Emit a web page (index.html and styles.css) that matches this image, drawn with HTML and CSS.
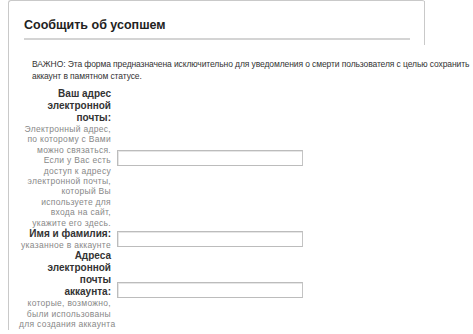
FILE: index.html
```html
<!DOCTYPE html>
<html lang="ru">
<head>
	<meta charset="UTF-8">
	<title>Сообщить об усопшем</title>
	<link rel="stylesheet" href="styles.css">
</head>
<body>
	<section class="box">
		<div class="head">
			<h2>Сообщить об усопшем</h2>
		</div>
		<p class="notice">ВАЖНО: Эта форма предназначена исключительно для уведомления о смерти пользователя с целью сохранить<br>аккаунт в памятном статусе.</p>

		<div class="form">
			<div class="row">
				<label class="lbl">
					<b>Ваш адрес<br>электронной<br>почты:</b>
					<span>Электронный адрес,<br>по которому с Вами<br>можно связаться.<br>Если у Вас есть<br>доступ к адресу<br>электронной почты,<br>который Вы<br>используете для<br>входа на сайт,<br>укажите его здесь.</span>
				</label>
				<input type="text" class="inp">
			</div>
			<div class="row">
				<label class="lbl">
					<b>Имя и фамилия:</b>
					<span>указанное в аккаунте</span>
				</label>
				<input type="text" class="inp">
			</div>
			<div class="row">
				<label class="lbl">
					<b>Адреса<br>электронной<br>почты<br>аккаунта:</b>
					<span>которые, возможно,<br>были использованы<br>для создания аккаунта</span>
				</label>
				<input type="text" class="inp">
			</div>
		</div>
	</section>
</body>
</html>
```

FILE: styles.css
```css
*{margin:0; padding:0;}
body{
	background:#fff;
	font-family:"Liberation Sans", Arial, sans-serif;
	color:#333;
}
.box{
	margin-left:8px;
	width:416px;
	border-left:1px solid #c9c9c9;
	border-top:1px solid #c9c9c9;
	border-top-left-radius:3px;
	border-top-right-radius:3px;
}
.head{
	height:44px;
	padding:0 14px 0 15px;
	border-right:1px solid #c9c9c9;
}
.head h2{
	padding-top:17px;
	padding-bottom:5px;
	font-size:12.5px;
	line-height:15px;
	font-weight:bold;
	color:#222;
	border-bottom:2px solid #d4d4d4;
}
.notice{
	margin:13px 0 0 23px;
	font-size:8.5px;
	letter-spacing:-0.1px;
	line-height:12px;
	white-space:nowrap;
}
.form{
	margin-top:6px;
}
.row{
	display:flex;
	align-items:center;
}
.lbl{
	width:92px;
	margin-left:10px;
	text-align:right;
	white-space:nowrap;
}
.lbl b{
	display:block;
	font-size:10px;
	line-height:12px;
	color:#333;
}
.lbl span{
	display:block;
	font-size:8.5px;
	letter-spacing:0.3px;
	line-height:10.4px;
	color:#888;
}
.inp{
	box-sizing:border-box;
	width:186px;
	height:16px;
	margin-left:6px;
	padding:0 2px;
	border:1px solid #bcbcbc;
	border-right-color:#c4c4c4;
	box-shadow:inset 1px 1px 0 #e6e6e6;
	outline:none;
}
```
